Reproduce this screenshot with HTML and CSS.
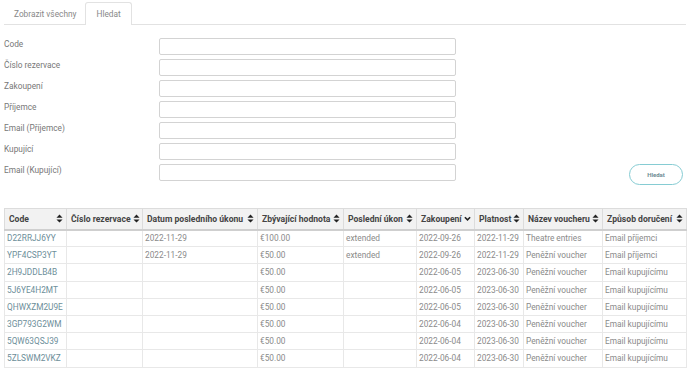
FILE: index.html
```html
<!DOCTYPE html>
<html lang="cs">
<head>
<meta charset="utf-8">
<link rel="stylesheet" href="styles.css">
</head>
<body>
<ul class="tabs">
  <li class="tab">Zobrazit všechny</li>
  <li class="tab active">Hledat</li>
</ul>
<form class="search">
  <div class="row"><label>Code</label><input class="field" type="text"></div>
  <div class="row"><label>Číslo rezervace</label><input class="field" type="text"></div>
  <div class="row"><label>Zakoupení</label><input class="field" type="text"></div>
  <div class="row"><label>Příjemce</label><input class="field" type="text"></div>
  <div class="row"><label>Email (Příjemce)</label><input class="field" type="text"></div>
  <div class="row"><label>Kupující</label><input class="field" type="text"></div>
  <div class="row"><label>Email (Kupující)</label><input class="field" type="text"><button type="button" class="btn">Hledat</button></div>
</form>
<table class="grid">
  <colgroup>
    <col style="width:62px"><col style="width:76px"><col style="width:115px"><col style="width:86px"><col style="width:73px"><col style="width:58px"><col style="width:49px"><col style="width:79px"><col style="width:84px">
  </colgroup>
  <thead>
    <tr>
      <th><div class="hc"><span>Code</span><svg class="sort" viewBox="0 0 8 10"><path d="M4 0.5L7.5 4H0.5Z M4 9.5L7.5 6H0.5Z"/></svg></div></th>
      <th><div class="hc"><span>Číslo rezervace</span><svg class="sort" viewBox="0 0 8 10"><path d="M4 0.5L7.5 4H0.5Z M4 9.5L7.5 6H0.5Z"/></svg></div></th>
      <th><div class="hc"><span>Datum posledního úkonu</span><svg class="sort" viewBox="0 0 8 10"><path d="M4 0.5L7.5 4H0.5Z M4 9.5L7.5 6H0.5Z"/></svg></div></th>
      <th><div class="hc"><span>Zbývající hodnota</span><svg class="sort" viewBox="0 0 8 10"><path d="M4 0.5L7.5 4H0.5Z M4 9.5L7.5 6H0.5Z"/></svg></div></th>
      <th><div class="hc"><span>Poslední úkon</span><svg class="sort" viewBox="0 0 8 10"><path d="M4 0.5L7.5 4H0.5Z M4 9.5L7.5 6H0.5Z"/></svg></div></th>
      <th><div class="hc"><span>Zakoupení</span><svg class="sort down" viewBox="0 0 8 10"><path d="M1 3.5L4 6.5L7 3.5"/></svg></div></th>
      <th><div class="hc"><span>Platnost</span><svg class="sort" viewBox="0 0 8 10"><path d="M4 0.5L7.5 4H0.5Z M4 9.5L7.5 6H0.5Z"/></svg></div></th>
      <th><div class="hc"><span>Název voucheru</span><svg class="sort" viewBox="0 0 8 10"><path d="M4 0.5L7.5 4H0.5Z M4 9.5L7.5 6H0.5Z"/></svg></div></th>
      <th><div class="hc"><span>Způsob doručení</span><svg class="sort" viewBox="0 0 8 10"><path d="M4 0.5L7.5 4H0.5Z M4 9.5L7.5 6H0.5Z"/></svg></div></th>
    </tr>
  </thead>
  <tbody>
    <tr><td class="code">D22RRJJ6YY</td><td></td><td>2022-11-29</td><td>€100.00</td><td>extended</td><td>2022-09-26</td><td>2022-11-29</td><td>Theatre entries</td><td>Email příjemci</td></tr>
    <tr><td class="code">YPF4CSP3YT</td><td></td><td>2022-11-29</td><td>€50.00</td><td>extended</td><td>2022-09-26</td><td>2022-11-29</td><td>Peněžní voucher</td><td>Email příjemci</td></tr>
    <tr><td class="code">2H9JDDLB4B</td><td></td><td></td><td>€50.00</td><td></td><td>2022-06-05</td><td>2023-06-30</td><td>Peněžní voucher</td><td>Email kupujícímu</td></tr>
    <tr><td class="code">5J6YE4H2MT</td><td></td><td></td><td>€50.00</td><td></td><td>2022-06-05</td><td>2023-06-30</td><td>Peněžní voucher</td><td>Email kupujícímu</td></tr>
    <tr><td class="code">QHWXZM2U9E</td><td></td><td></td><td>€50.00</td><td></td><td>2022-06-05</td><td>2023-06-30</td><td>Peněžní voucher</td><td>Email kupujícímu</td></tr>
    <tr><td class="code">3GP793G2WM</td><td></td><td></td><td>€50.00</td><td></td><td>2022-06-04</td><td>2023-06-30</td><td>Peněžní voucher</td><td>Email kupujícímu</td></tr>
    <tr><td class="code">5QW63QSJ39</td><td></td><td></td><td>€50.00</td><td></td><td>2022-06-04</td><td>2023-06-30</td><td>Peněžní voucher</td><td>Email kupujícímu</td></tr>
    <tr><td class="code">5ZLSWM2VKZ</td><td></td><td></td><td>€50.00</td><td></td><td>2022-06-04</td><td>2023-06-30</td><td>Peněžní voucher</td><td>Email kupujícímu</td></tr>
  </tbody>
</table>
</body>
</html>
```
FILE: styles.css
```css
* { box-sizing: border-box; }
html, body { margin: 0; background: #fff; }
body {
  padding: 0 2px 0 4px;
  font-family: Roboto, "Liberation Sans", sans-serif;
  font-size: 8.3px;
  color: #777;
  overflow: hidden;
  height: 371px;
}
.tabs {
  list-style: none;
  margin: 0;
  padding: 2px 0 0 0;
  display: flex;
  border-bottom: 1px solid #e2e2e2;
  height: 25px;
}
.tab {
  padding: 0 8px 0 9px;
  line-height: 22px;
  color: #888;
  border: 1px solid transparent;
  border-bottom: none;
}
.active {
  border-color: #e2e2e2;
  border-radius: 3px 3px 0 0;
  background: #fff;
  margin-bottom: -1px;
  height: 23px;
  padding: 0 10px;
}
.search {
  margin: 11px 0 0 0;
}
.row {
  display: flex;
  align-items: center;
  height: 21px;
}
.row label {
  width: 155px;
  color: #777;
  margin-top: -5px;
}
.field {
  width: 297px;
  height: 17px;
  border: 1px solid #d3d3d3;
  border-radius: 2px;
  margin: 0;
  padding: 0;
}
.btn {
  margin-left: auto;
  margin-right: 3px;
  margin-top: 4px;
  width: 54px;
  height: 21px;
  border: 1px solid #86ccd3;
  border-radius: 11px;
  background: #fff;
  color: #6f8d95;
  font-family: Roboto, "Liberation Sans", sans-serif;
  font-size: 6px;
  font-weight: 700;
  padding: 0;
}
.grid {
  margin-top: 25px;
  border-collapse: collapse;
  table-layout: fixed;
  width: 682px;
  border: 1px solid #e6e6e6;
}
.grid th {
  background: #f2f2f2;
  height: 21px;
  padding: 0 3px 0 4px;
  text-align: left;
  font-weight: 700;
  color: #444;
  font-size: 8.6px;
  border: 1px solid #dcdcdc;
  border-bottom: 2px solid #cfcfcf;
  white-space: nowrap;
  overflow: hidden;
}
.hc {
  display: flex;
  align-items: center;
  justify-content: space-between;
  gap: 2px;
}
.sort {
  width: 7px;
  height: 9px;
  flex: none;
  fill: #222;
}
.sort.down { fill: none; stroke: #222; stroke-width: 1.8; }
.grid td {
  height: 17.2px;
  padding: 0 2px;
  border: 1px solid #e8e8e8;
  color: #8a8a8a;
  white-space: nowrap;
  overflow: hidden;
}
.grid td.code { color: #6c8e99; }
```
